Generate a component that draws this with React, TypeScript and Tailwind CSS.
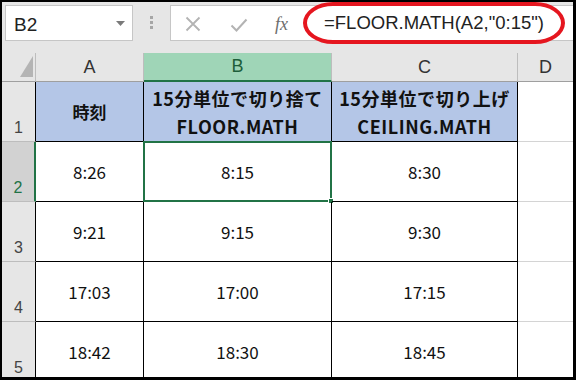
import React from 'react';

type Row = {
  num: number;
  height: string;
  cells: [string, string, string];
};

const rows: Row[] = [
  { num: 2, height: 'h-[60px]', cells: ['8:26', '8:15', '8:30'] },
  { num: 3, height: 'h-[60px]', cells: ['9:21', '9:15', '9:30'] },
  { num: 4, height: 'h-[60px]', cells: ['17:03', '17:00', '17:15'] },
  { num: 5, height: 'h-[60px]', cells: ['18:42', '18:30', '18:45'] },
];

const jp = "font-['Noto_Sans_CJK_JP','Noto_Sans',sans-serif]";
const ui = "font-['Liberation_Sans',Arial,sans-serif]";

function RowHeader({ num, active }: { num: number; active?: boolean }) {
  return (
    <div
      className={`flex items-end justify-center pb-[5px] text-[16px] leading-none ${ui} ${
        active
          ? 'bg-[#d2d2d2] text-[#217346] border-r-2 border-r-[#217346] border-b border-b-[#bdbdbd]'
          : 'bg-[#e6e6e6] text-[#444] border-r border-r-black border-b border-b-[#bdbdbd]'
      }`}
    >
      {num}
    </div>
  );
}

export default function App() {
  return (
    <div className="w-[576px] h-[382px] bg-white overflow-hidden">
      <div className="relative h-[380px] border-t-2 border-l-2 border-r-[3px] border-b-[3px] border-black bg-[#e6e6e6] flex flex-col overflow-hidden">
        {/* name box + formula bar */}
        <div className="h-[51px] shrink-0 flex items-start pt-[3px] pl-[3px]">
          <div className="w-[128px] h-[36px] bg-white border border-[#c6c6c6] flex items-center justify-between pl-[8px] pr-[7px]">
            <span className={`${ui} text-[19px] text-[#222] pt-[4px]`}>B2</span>
            <svg width="9" height="5" viewBox="0 0 9 5">
              <path d="M0 0h9L4.5 5z" fill="#7a7a7a" />
            </svg>
          </div>
          <div className="w-[37px] h-[36px] flex flex-col items-center justify-center gap-[2px] pb-[1px]">
            <span className="w-[3px] h-[3px] bg-[#a6a6a6]" />
            <span className="w-[3px] h-[3px] bg-[#a6a6a6]" />
            <span className="w-[3px] h-[3px] bg-[#a6a6a6]" />
          </div>
          <div className="flex-1 -mr-[6px] h-[36px] bg-white border border-[#c6c6c6] flex items-center">
            <svg className="ml-[14px] mt-[2px]" width="16" height="16" viewBox="0 0 16 16">
              <path d="M1.5 1.5l13 13M14.5 1.5l-13 13" stroke="#b3b3b3" strokeWidth="1.8" />
            </svg>
            <svg className="ml-[29px] mt-[3px]" width="18" height="14" viewBox="0 0 18 14">
              <path d="M1.5 7.5l5 5L16.5 1.5" stroke="#b3b3b3" strokeWidth="2" fill="none" />
            </svg>
            <span className="ml-[27px] mt-[2px] font-['Liberation_Serif',serif] italic text-[18px] text-[#6d6d6d]">
              fx
            </span>
            <span className={`ml-[36px] ${ui} text-[18.5px] text-[#222]`}>=FLOOR.MATH(A2,"0:15")</span>
          </div>
        </div>

        {/* column headers */}
        <div className={`grid grid-cols-[34px_108px_188px_186px_1fr] h-[29px] shrink-0 ${ui} text-[18px]`}>
          <div className="relative border-r border-r-[#bdbdbd] border-b border-b-[#9f9f9f]">
            <svg className="absolute left-[18px] bottom-[4px]" width="13" height="21" viewBox="0 0 13 21">
              <path d="M13 0v21H0z" fill="#b4b4b4" />
            </svg>
          </div>
          <div className="flex items-center justify-center text-[#333] border-r border-r-[#bdbdbd] border-b border-b-[#9f9f9f]">A</div>
          <div className="flex items-center justify-center text-[#1e5e3a] bg-[#9fd5b7] border-r border-r-[#bdbdbd] border-b-2 border-b-[#217346]">
            B
          </div>
          <div className="flex items-center justify-center text-[#333] border-r border-r-[#bdbdbd] border-b border-b-[#9f9f9f]">C</div>
          <div className="flex items-center justify-center text-[#333] border-b border-b-[#9f9f9f]">D</div>
        </div>

        {/* sheet body */}
        <div className={`grid grid-cols-[34px_108px_188px_186px_1fr] bg-white ${jp} text-[#111]`}>
          <RowHeader num={1} />
          <div className="h-[60px] bg-[#b4c6e7] border-r border-b border-black flex items-center justify-center text-[17px] font-bold">
            時刻
          </div>
          <div className="h-[60px] bg-[#b4c6e7] border-r border-b border-black flex flex-col items-center justify-center text-[18px] leading-[28px] font-bold tracking-[0.03em]">
            <span>15分単位で切り捨て</span>
            <span>FLOOR.MATH</span>
          </div>
          <div className="h-[60px] bg-[#b4c6e7] border-r border-b border-black flex flex-col items-center justify-center text-[18px] leading-[28px] font-bold tracking-[0.03em]">
            <span>15分単位で切り上げ</span>
            <span>CEILING.MATH</span>
          </div>
          <div className="h-[60px] border-b border-b-[#d4d4d4]" />

          {rows.map((r) => (
            <React.Fragment key={r.num}>
              <RowHeader num={r.num} active={r.num === 2} />
              {r.cells.map((v, i) => (
                <div
                  key={i}
                  className={`relative ${r.height} border-r border-b border-black flex items-center justify-center text-[17px]`}
                >
                  {v}
                  {r.num === 2 && i === 1 && (
                    <>
                      <span className="absolute -left-[1px] -top-[1px] -right-[1px] -bottom-[1px] border-2 border-[#217346]" />
                      <span className="absolute -right-[3px] -bottom-[3px] w-[6px] h-[6px] bg-[#217346] border border-white" />
                    </>
                  )}
                </div>
              ))}
              <div className={`${r.height} border-b border-b-[#d4d4d4]`} />
            </React.Fragment>
          ))}
        </div>

        {/* red mark around the formula */}
        <div className="absolute left-[301px] top-0 w-[262px] h-[42px] border-[4px] border-[#e5161f] rounded-[30px/21px]" />
      </div>
    </div>
  );
}
